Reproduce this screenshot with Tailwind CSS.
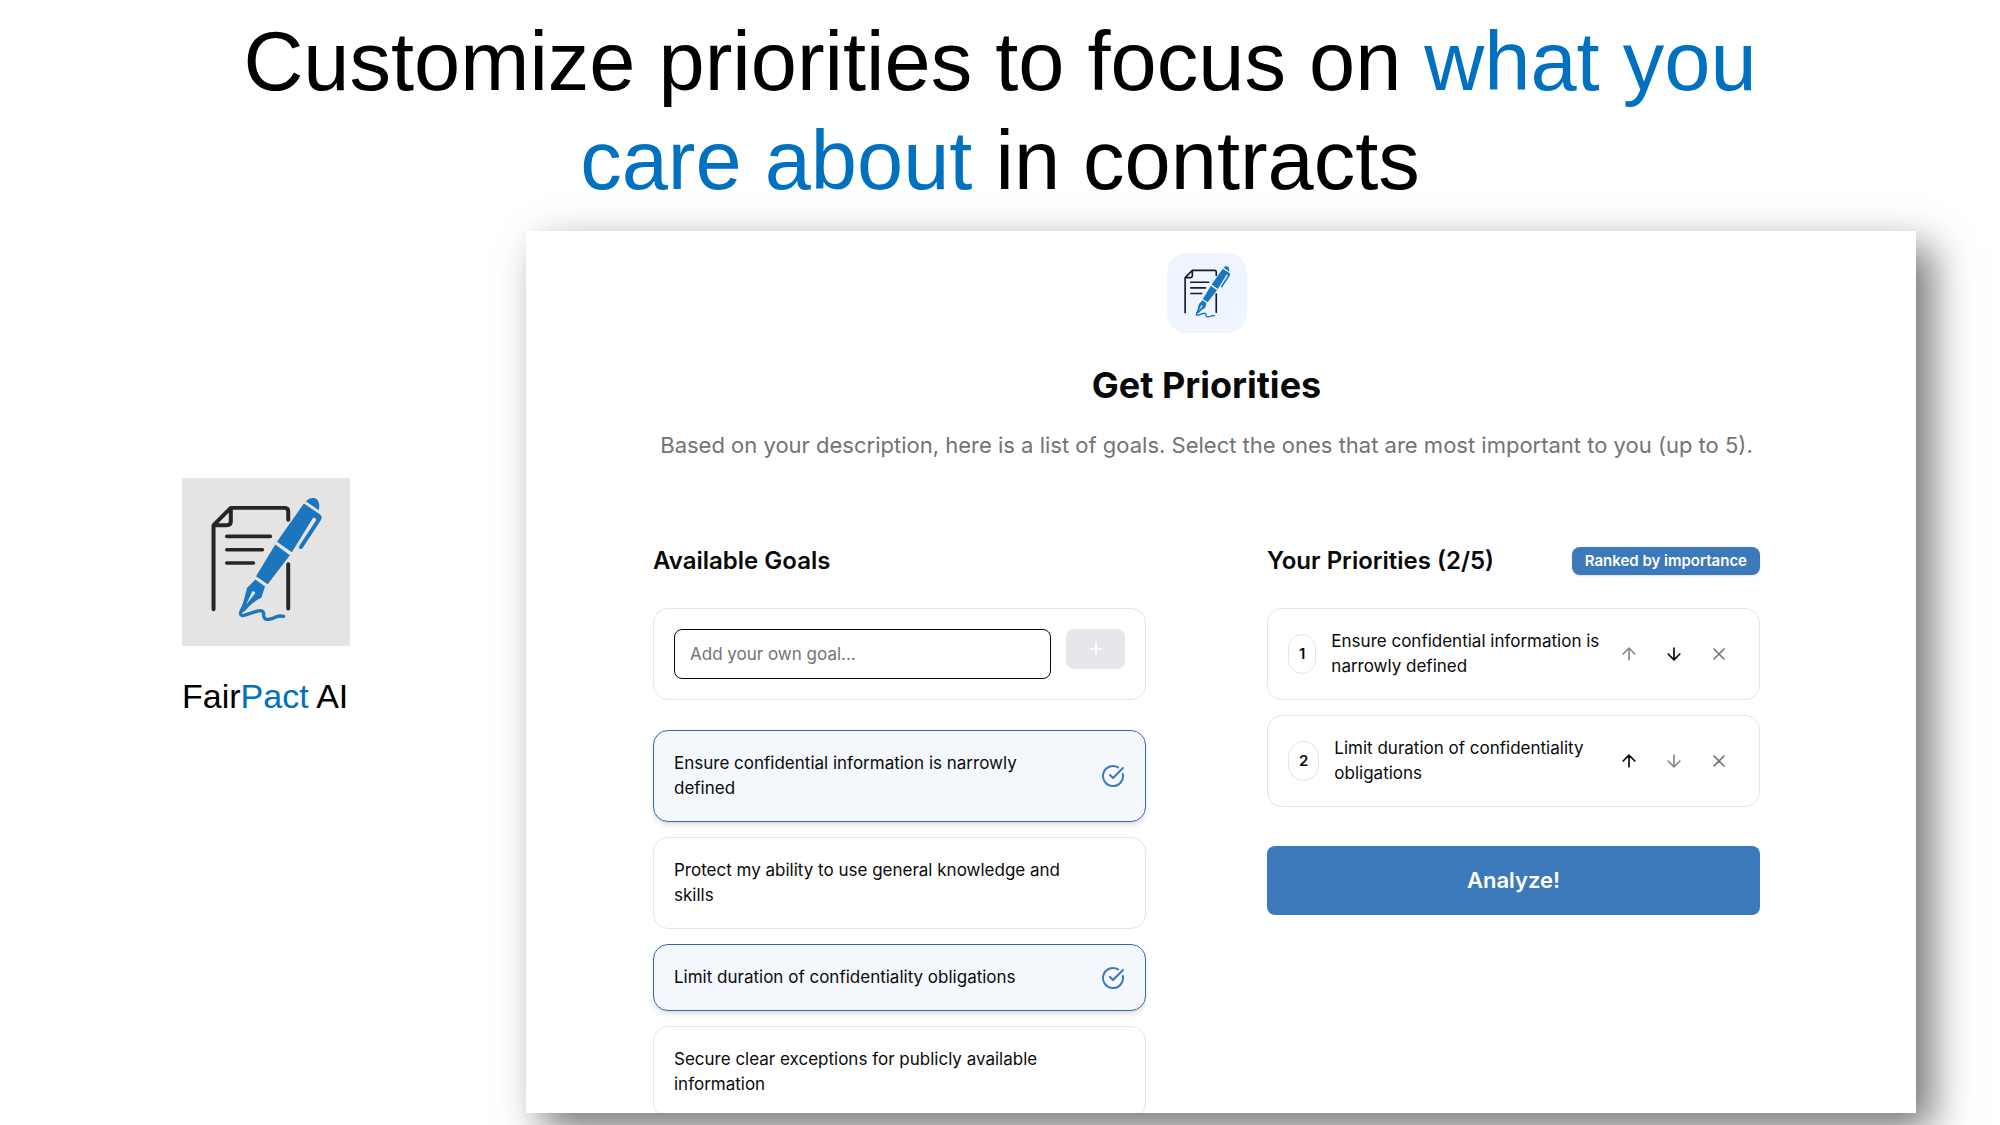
<!DOCTYPE html>
<html lang="en">
<head>
    <meta charset="UTF-8">
    <meta name="viewport" content="width=device-width, initial-scale=1.0">
    <title>FairPact AI</title>
    <script src="https://cdn.jsdelivr.net/npm/@tailwindcss/browser@4"></script>
</head>
<body class="flex h-screen flex-col overflow-hidden bg-white font-[Inter,sans-serif] text-[#0a0a0a]">
    <!-- Shared icons -->
    <svg class="hidden">
        <symbol id="logo" viewBox="66 54 504 506">
            <g fill="none" stroke="currentColor" stroke-width="12" stroke-linecap="round" stroke-linejoin="round">
                <path d="M160 449V196L212 144H374Q385 144 385 155V180M160 196H200Q212 196 212 184V144M385 314V447"/>
                <path stroke-width="11" d="M200 230H331M200 270H307M200 310H280"/>
            </g>
            <g fill="#1b76bd">
                <path d="M438 124Q450 111 466 115Q483 124 477 151Z"/>
                <path d="M432 131L480 163Q489 170 484 180L429 264Q425 270 419 266Q416 262 419 257L468 183Q470 176 465 174Q460 172 457 178L396 278L351 246Z"/>
                <path d="M346 254L390 287L323 374L288 350Z"/>
                <path fill-rule="evenodd" d="M286 360L315 381L304 415Q272 430 254 455L240 460Q256 425 260 386ZM275 399L258 436L285 402A5 5 0 1 0 275 399Z"/>
            </g>
            <path fill="none" stroke="#1b76bd" stroke-width="10" stroke-linecap="round" stroke-linejoin="round" d="M262 400Q256 432 243 455Q237 472 254 467L292 455Q308 450 311 461Q309 482 326 480Q338 478 350 472Q358 468 371 471"/>
        </symbol>
        <symbol id="check" viewBox="0 0 24 24" fill="none" stroke="currentColor" stroke-width="2" stroke-linecap="round" stroke-linejoin="round">
            <path d="M21.8 10A10 10 0 1 1 17 3.335"/><path d="m9 11 3 3L22 4"/>
        </symbol>
        <symbol id="up" viewBox="0 0 24 24" fill="none" stroke="currentColor" stroke-width="2" stroke-linecap="round" stroke-linejoin="round">
            <path d="m5 12 7-7 7 7M12 19V5"/>
        </symbol>
        <symbol id="down" viewBox="0 0 24 24" fill="none" stroke="currentColor" stroke-width="2" stroke-linecap="round" stroke-linejoin="round">
            <path d="M12 5v14M19 12l-7 7-7-7"/>
        </symbol>
        <symbol id="close" viewBox="0 0 24 24" fill="none" stroke="currentColor" stroke-width="2" stroke-linecap="round" stroke-linejoin="round">
            <path d="M18 6 6 18M6 6l12 12"/>
        </symbol>
        <symbol id="plus" viewBox="0 0 24 24" fill="none" stroke="currentColor" stroke-width="2" stroke-linecap="round" stroke-linejoin="round">
            <path d="M5 12h14M12 5v14"/>
        </symbol>
    </svg>

    <h1 class="shrink-0 px-[200px] pt-3 pb-[21px] text-center font-['Liberation_Sans',Arial,sans-serif] text-[83px] leading-[99px] text-black">
        Customize priorities to focus on <span class="text-[#0070c0]">what you<br>care about</span> in contracts
    </h1>

    <div class="flex min-h-0 flex-1 pr-[84px] pb-3">
        <aside class="w-[526px] shrink-0 pt-[247px] pl-[182px]">
            <div class="size-[168px] bg-[#e5e4e2] text-[#24262a]">
                <svg class="size-full"><use href="#logo"/></svg>
            </div>
            <p class="mt-7 font-['Liberation_Sans',Arial,sans-serif] text-[34px] leading-[44px] whitespace-nowrap text-black">Fair<span class="text-[#0070c0]">Pact</span> AI</p>
        </aside>

        <main class="min-w-0 flex-1 overflow-hidden bg-white pt-[22px] pr-[156px] pl-[127px] shadow-[16px_16px_38px_rgba(0,0,0,0.55)]">
            <header class="flex flex-col items-center text-center">
                <div class="flex size-20 items-center justify-center rounded-[20px] bg-[#eff5fe] text-[#171a2a]">
                    <svg class="size-[70px]"><use href="#logo"/></svg>
                </div>
                <h2 class="mt-[30px] text-[36px] leading-[45px] font-bold">Get Priorities</h2>
                <p class="mt-5 text-[22px] leading-[35px] whitespace-nowrap text-[#737373]">Based on your description, here is a list of goals. Select the ones that are most important to you (up to 5).</p>
            </header>

            <div class="mt-20 grid grid-cols-2 gap-[121px] text-[17px] leading-[25px]">
                <section>
                    <h3 class="mb-[30px] text-[24px] leading-[35px] font-semibold">Available Goals</h3>
                    <form class="mb-[30px] flex items-start gap-[15px] rounded-[15px] border border-[#e5e5e5] p-5">
                        <input type="text" aria-label="Add your own goal" placeholder="Add your own goal..." class="h-[50px] min-w-0 flex-1 rounded-lg border border-[#0a0a0a] px-[15px] placeholder:text-[#737373]">
                        <button type="button" aria-label="Add goal" class="flex h-10 w-[59px] items-center justify-center rounded-lg bg-[#e6e7ea] text-white">
                            <svg class="size-5"><use href="#plus"/></svg>
                        </button>
                    </form>
                    <div class="flex flex-col gap-[15px]">
                        <button type="button" class="flex items-center justify-between gap-[15px] rounded-[15px] border border-[#2f6db0] bg-[#f4f7fb] p-5 text-left shadow-md">
                            <span class="max-w-[400px]">Ensure confidential information is narrowly defined</span>
                            <svg class="size-6 shrink-0 text-[#3b79ba]"><use href="#check"/></svg>
                        </button>
                        <button type="button" class="rounded-[15px] border border-[#e5e5e5] p-5 text-left">
                            <span class="block max-w-[410px]">Protect my ability to use general knowledge and skills</span>
                        </button>
                        <button type="button" class="flex items-center justify-between gap-[15px] rounded-[15px] border border-[#2f6db0] bg-[#f4f7fb] p-5 text-left shadow-md">
                            <span>Limit duration of confidentiality obligations</span>
                            <svg class="size-6 shrink-0 text-[#3b79ba]"><use href="#check"/></svg>
                        </button>
                        <button type="button" class="rounded-[15px] border border-[#e5e5e5] p-5 text-left">
                            <span class="block max-w-[410px]">Secure clear exceptions for publicly available information</span>
                        </button>
                    </div>
                </section>

                <section>
                    <div class="mb-[30px] flex items-center justify-between">
                        <h3 class="text-[24px] leading-[35px] font-semibold">Your Priorities (2/5)</h3>
                        <span class="rounded-lg bg-[#3b79ba] px-[13px] py-px text-[15px] leading-[26px] font-semibold text-white shadow-sm">Ranked by importance</span>
                    </div>
                    <ol class="flex flex-col gap-[15px]">
                        <li class="flex items-center rounded-[15px] border border-[#e5e5e5] p-5">
                            <span class="mr-[15px] rounded-full border border-[#e5e5e5] px-[10px] py-[7px] text-[15px] leading-[24px] font-semibold">1</span>
                            <span class="min-w-0 flex-1">Ensure confidential information is narrowly defined</span>
                            <div class="flex gap-[5px]">
                                <button type="button" aria-label="Move up" disabled class="flex size-10 items-center justify-center text-[#8a8a8a]"><svg class="size-5"><use href="#up"/></svg></button>
                                <button type="button" aria-label="Move down" class="flex size-10 items-center justify-center"><svg class="size-5"><use href="#down"/></svg></button>
                                <button type="button" aria-label="Remove" class="flex size-10 items-center justify-center text-[#737373]"><svg class="size-5"><use href="#close"/></svg></button>
                            </div>
                        </li>
                        <li class="flex items-center rounded-[15px] border border-[#e5e5e5] p-5">
                            <span class="mr-[15px] rounded-full border border-[#e5e5e5] px-[10px] py-[7px] text-[15px] leading-[24px] font-semibold">2</span>
                            <span class="min-w-0 flex-1">Limit duration of confidentiality obligations</span>
                            <div class="flex gap-[5px]">
                                <button type="button" aria-label="Move up" class="flex size-10 items-center justify-center"><svg class="size-5"><use href="#up"/></svg></button>
                                <button type="button" aria-label="Move down" disabled class="flex size-10 items-center justify-center text-[#8a8a8a]"><svg class="size-5"><use href="#down"/></svg></button>
                                <button type="button" aria-label="Remove" class="flex size-10 items-center justify-center text-[#737373]"><svg class="size-5"><use href="#close"/></svg></button>
                            </div>
                        </li>
                    </ol>
                    <button type="button" class="mt-[39px] h-[69px] w-full rounded-lg bg-[#3b79ba] text-[22px] font-semibold text-white">Analyze!</button>
                </section>
            </div>
        </main>
    </div>
</body>
</html>
